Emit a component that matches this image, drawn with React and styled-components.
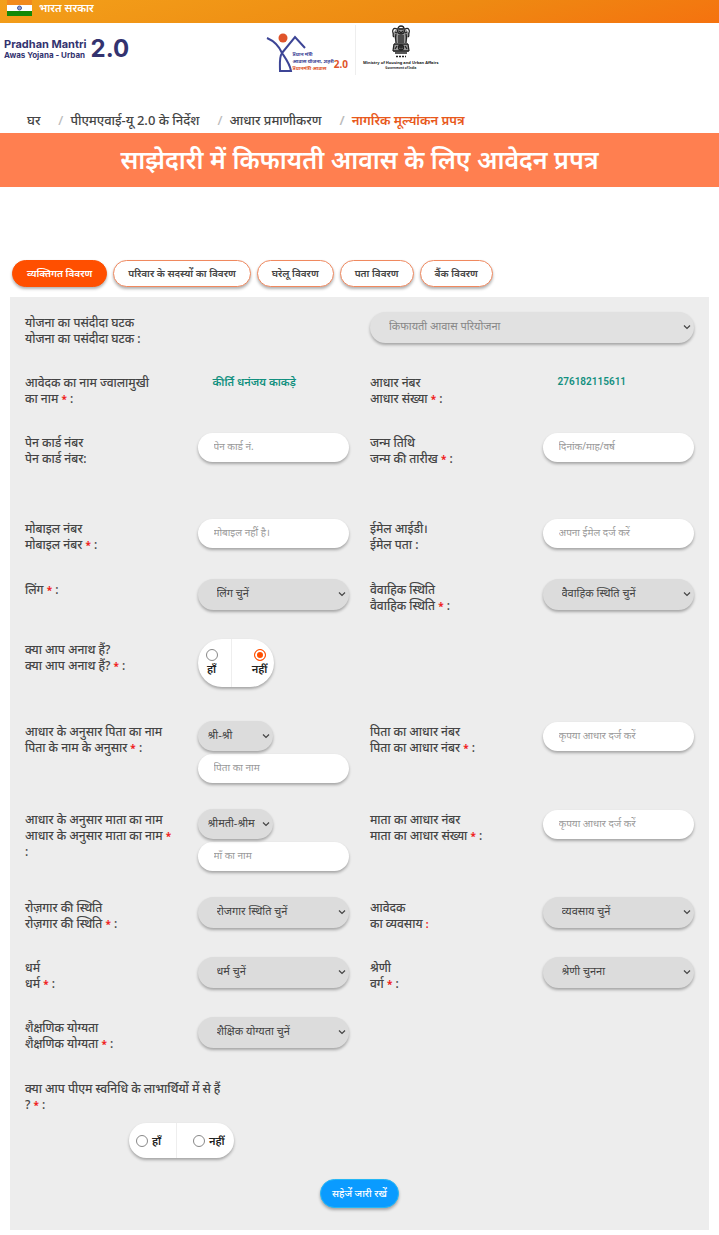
import React, { useState } from "react";
import styled, { createGlobalStyle } from "styled-components";

const GlobalStyle = createGlobalStyle`
	* {
		box-sizing: border-box;
	}
	body {
		margin: 0;
		background: #fff;
		color: #444;
		font-family: "Noto Sans", "Noto Sans Devanagari", sans-serif;
		font-size: 12px;
		line-height: 16px;
	}
	button, input, select {
		font-family: inherit;
	}
`;

const tabs = [
	"व्यक्तिगत विवरण",
	"परिवार के सदस्यों का विवरण",
	"घरेलू विवरण",
	"पता विवरण",
	"बैंक विवरण",
];

const Chevron = () => (
	<ChevronIcon viewBox="0 0 8 8" aria-hidden="true">
		<path d="M1 2.5 L4 5.5 L7 2.5" fill="none" stroke="currentColor" strokeWidth="1.2" />
	</ChevronIcon>
);

const Label = ({ id, first, second, mark = "both" }) => (
	<FieldLabel htmlFor={id}>
		{first && <>{first}<br /></>}
		{second}
		{mark === "both" && <> <Star>*</Star> :</>}
		{mark === "colon" && " :"}
		{mark === "tight" && ":"}
		{mark === "red" && <> <Star>:</Star></>}
	</FieldLabel>
);

const Select = ({ id, text, size, disabled, label }) => (
	<SelectWrap $size={size} $off={disabled}>
		<select id={id} disabled={disabled} aria-label={label}>
			<option>{text}</option>
		</select>
		<Chevron />
	</SelectWrap>
);

const HouseLogo = () => (
	<svg width="42" height="39" viewBox="0 0 42 39" aria-hidden="true">
		<circle cx="17" cy="5" r="4.5" fill="#e0542a" />
		<path d="M1 5 C8 8 13 13 16 20 L29 4 L39 15 M16 20 C13 24 14 31 14 38 H25 C24 31 20 26 16 20" fill="none" stroke="#3d4596" strokeWidth="2" />
	</svg>
);

const Emblem = () => (
	<svg width="20" height="33" viewBox="0 0 20 33" aria-hidden="true">
		<path d="M6 3 H14 L18 8 L15 18 H5 L2 8 Z M3 19 H17 V27 H3 Z" fill="#999" />
		<g fill="none" stroke="#222" strokeWidth="1.3">
			<path d="M7 4 C7 0 13 0 13 4 C14 7 13 9 10 9 C7 9 6 7 7 4 Z" />
			<path d="M6 4 C2 2 1 6 2 8 C3 10 1 10 3 12 M14 4 C18 2 19 6 18 8 C17 10 19 10 17 12" />
			<path d="M4 7 L6 8 M14 8 L16 7 M8 4 H12 M8 6 L10 8 L12 6" />
			<path d="M5 9 C4 13 5 15 5 18 M15 9 C16 13 15 15 15 18 M8 10 V18 M10 10 V18 M12 10 V18" />
			<path d="M3 19 H17 M2 26 H18 M3 19 L2 26 M17 19 L18 26 M4 28 H16" />
			<circle cx="10" cy="22.5" r="2.5" />
			<path d="M4 24 L6 21 M14 21 L16 24 M10 20 V25 M8 22 H12" />
		</g>
		<path d="M5 31.5 H15" stroke="#222" strokeWidth="1.5" strokeDasharray="2 1" />
	</svg>
);

const App = () => {
	const [orphan, setOrphan] = useState("no");
	const [svanidhi, setSvanidhi] = useState("");
	const [tab, setTab] = useState(0);

	return (
		<>
			<GlobalStyle />
			<TopBar>
				<svg width="25" height="16" viewBox="0 0 25 16" aria-hidden="true">
					<rect width="25" height="5" fill="#f28a1c" />
					<rect y="5" width="25" height="6" fill="#fff" />
					<rect y="11" width="25" height="5" fill="#128807" />
					<circle cx="12.5" cy="8" r="2" fill="#8f9bd0" stroke="#4457a0" />
				</svg>
				<span>भारत सरकार</span>
			</TopBar>
			<Header>
				<Brand>
					<div>
						<BrandTitle>Pradhan Mantri</BrandTitle>
						<BrandSub>Awas Yojana - Urban</BrandSub>
					</div>
					<BrandVersion>2.0</BrandVersion>
				</Brand>
				<Logos>
					<House>
						<HouseLogo />
						<HouseText>
							<span>प्रधान मंत्री</span>
							<span>आवास योजना, शहरी</span>
							<em>प्रधानमंत्री आवास</em>
						</HouseText>
						<HouseVersion>2.0</HouseVersion>
					</House>
					<Ministry>
						<Emblem />
						<b>Ministry of Housing and Urban Affairs</b>
						<small>Government of India</small>
					</Ministry>
				</Logos>
			</Header>
			<Crumbs>
				<a href="#home">घर</a>
				<a href="#guide">पीएमएवाई-यू 2.0 के निर्देश</a>
				<a href="#aadhaar">आधार प्रमाणीकरण</a>
				<a href="#form" aria-current="page">नागरिक मूल्यांकन प्रपत्र</a>
			</Crumbs>
			<Title>साझेदारी में किफायती आवास के लिए आवेदन प्रपत्र</Title>
			<Tabs>
				{tabs.map((name, i) => (
					<Tab key={name} type="button" $active={tab === i} onClick={() => setTab(i)}>
						{name}
					</Tab>
				))}
			</Tabs>
			<Panel onSubmit={(e) => e.preventDefault()}>
				<Row>
					<Wide><Label id="scheme" first="योजना का पसंदीदा घटक" second="योजना का पसंदीदा घटक" mark="colon" /></Wide>
					<Wide><Select id="scheme" text="किफायती आवास परियोजना" disabled /></Wide>
				</Row>
				<Row>
					<Label id="name" first="आवेदक का नाम ज्वालामुखी" second="का नाम" />
					<Value id="name">कीर्ति धनंजय काकड़े</Value>
					<Label id="aadhaar" first="आधार नंबर" second="आधार संख्या" />
					<Value id="aadhaar" $number>276182115611</Value>
				</Row>
				<Row $h={86}>
					<Label id="pan" first="पेन कार्ड नंबर" second="पेन कार्ड नंबर" mark="tight" />
					<Input id="pan" placeholder="पेन कार्ड नं." />
					<Label id="dob" first="जन्म तिथि" second="जन्म की तारीख" />
					<Input id="dob" placeholder="दिनांक/माह/वर्ष" />
				</Row>
				<Row $h={61}>
					<Label id="mobile" first="मोबाइल नंबर" second="मोबाइल नंबर" />
					<Input id="mobile" placeholder="मोबाइल नहीं है।" />
					<Label id="email" first="ईमेल आईडी।" second="ईमेल पता" mark="colon" />
					<Input id="email" placeholder="अपना ईमेल दर्ज करें" />
				</Row>
				<Row>
					<Label id="gender" second="लिंग" />
					<Select id="gender" text="लिंग चुनें" />
					<Label id="marital" first="वैवाहिक स्थिति" second="वैवाहिक स्थिति" />
					<Select id="marital" text="वैवाहिक स्थिति चुनें" />
				</Row>
				<Row $h={82}>
					<Label first="क्या आप अनाथ हैं?" second="क्या आप अनाथ हैं?" />
					<RadioPill role="radiogroup" aria-label="क्या आप अनाथ हैं?" $stacked>
						<label>
							<input type="radio" name="orphan" checked={orphan === "yes"} onChange={() => setOrphan("yes")} />
							हाँ
						</label>
						<label>
							<input type="radio" name="orphan" checked={orphan === "no"} onChange={() => setOrphan("no")} />
							नहीं
						</label>
					</RadioPill>
				</Row>
				<Row $h={88}>
					<Label id="father" first="आधार के अनुसार पिता का नाम" second="पिता के नाम के अनुसार" />
					<Stack>
						<Select text="श्री-श्री" size="s" label="पिता का नाम" />
						<Input id="father" placeholder="पिता का नाम" />
					</Stack>
					<Label id="fatherAadhaar" first="पिता का आधार नंबर" second="पिता का आधार नंबर" />
					<Input id="fatherAadhaar" placeholder="कृपया आधार दर्ज करें" />
				</Row>
				<Row $h={88}>
					<Label id="mother" first="आधार के अनुसार माता का नाम" second="आधार के अनुसार माता का नाम" />
					<Stack>
						<Select text="श्रीमती-श्रीमती" size="s" label="माता का नाम" />
						<Input id="mother" placeholder="माँ का नाम" />
					</Stack>
					<Label id="motherAadhaar" first="माता का आधार नंबर" second="माता का आधार संख्या" />
					<Input id="motherAadhaar" placeholder="कृपया आधार दर्ज करें" />
				</Row>
				<Row>
					<Label id="job" first="रोज़गार की स्थिति" second="रोज़गार की स्थिति" />
					<Select id="job" text="रोजगार स्थिति चुनें" />
					<Label id="work" first="आवेदक" second="का व्यवसाय" mark="red" />
					<Select id="work" text="व्यवसाय चुनें" />
				</Row>
				<Row>
					<Label id="religion" first="धर्म" second="धर्म" />
					<Select id="religion" text="धर्म चुनें" />
					<Label id="category" first="श्रेणी" second="वर्ग" />
					<Select id="category" text="श्रेणी चुनना" />
				</Row>
				<Row $h={61}>
					<Label id="education" first="शैक्षणिक योग्यता" second="शैक्षणिक योग्यता" />
					<Select id="education" text="शैक्षिक योग्यता चुनें" />
				</Row>
				<Row $h={45}>
					<Wide><Label first="क्या आप पीएम स्वनिधि के लाभार्थियों में से हैं" second="?" /></Wide>
				</Row>
				<Indent>
					<RadioPill role="radiogroup" aria-label="क्या आप पीएम स्वनिधि के लाभार्थियों में से हैं?">
						<label>
							<input type="radio" name="svanidhi" checked={svanidhi === "yes"} onChange={() => setSvanidhi("yes")} />
							हाँ
						</label>
						<label>
							<input type="radio" name="svanidhi" checked={svanidhi === "no"} onChange={() => setSvanidhi("no")} />
							नहीं
						</label>
					</RadioPill>
				</Indent>
				<Save type="submit">सहेजें जारी रखें</Save>
			</Panel>
		</>
	);
};

const TopBar = styled.div`
	display: flex;
	gap: 7px;
	height: 23px;
	padding-left: 7px;
	color: #fff;
	font-size: 11px;
	font-weight: 600;
	line-height: 15px;
	background: linear-gradient(165deg, #f3a01a, #ee8a12 60%, #f5720f);
`;
const Header = styled.header`
	display: grid;
	grid-template-columns: 1fr auto 1fr;
	height: 83px;
	padding: 2px 18px 2px 4px;
`;
const Brand = styled.div`
	display: flex;
	align-items: center;
	gap: 4px;
	height: 48px;
	color: #33336f;
	white-space: nowrap;
`;
const BrandTitle = styled.div`
	font-family: Inter, sans-serif;
	font-size: 11px;
	font-weight: 700;
	line-height: 12px;
`;
const BrandSub = styled.div`
	font-family: Inter, sans-serif;
	font-size: 8px;
	font-weight: 700;
	line-height: 10px;
`;
const BrandVersion = styled.div`
	font-family: Inter, sans-serif;
	font-size: 24px;
	font-weight: 700;
	line-height: 28px;
`;
const Logos = styled.div`
	display: flex;
	height: 50px;
`;
const House = styled.div`
	display: flex;
	align-items: flex-end;
	padding: 0 7px 3px 0;
	border-right: 1px solid #eee;
	white-space: nowrap;
`;
const HouseText = styled.div`
	display: flex;
	flex-direction: column;
	margin-left: -16px;
	color: #3d4596;
	font-size: 5px;
	font-weight: 700;
	line-height: 7px;
	em {
		color: #e0542a;
		font-style: normal;
	}
`;
const HouseVersion = styled.b`
	padding-bottom: 2px;
	color: #e0542a;
	font-size: 10px;
	line-height: 12px;
`;
const Ministry = styled.div`
	display: flex;
	flex-direction: column;
	align-items: center;
	padding-left: 7px;
	color: #222;
	white-space: nowrap;
	b {
		margin-top: 2px;
		font-size: 4px;
		line-height: 6px;
	}
	small {
		font-size: 3px;
		font-weight: 700;
		line-height: 5px;
	}
`;
const Crumbs = styled.nav`
	display: flex;
	align-items: center;
	height: 27px;
	padding-left: 27px;
	a {
		color: #444;
		font-size: 13px;
		font-weight: 500;
		text-decoration: none;
	}
	a + a::before {
		content: "/";
		margin: 0 7px 0 18px;
		color: #bbb;
	}
	a[aria-current] {
		color: #e8591c;
		font-weight: 600;
	}
`;
const Title = styled.h1`
	margin: 0 0 73px;
	padding: 10px 0 12px;
	background: #ff7f50;
	color: #fff;
	font-size: 25px;
	font-weight: 600;
	line-height: 32px;
	text-align: center;
`;
const Tabs = styled.div`
	display: flex;
	flex-wrap: wrap;
	gap: 6px;
	margin: 0 12px 10px;
`;
const Tab = styled.button`
	height: 27px;
	padding: 0 14px 2px;
	border: 1px solid ${({ $active }) => ($active ? "#ff4f00" : "#f0895f")};
	border-radius: 14px;
	background: ${({ $active }) => ($active ? "#ff4f00" : "#fff")};
	color: ${({ $active }) => ($active ? "#fff" : "#444")};
	font-size: 10px;
	font-weight: 600;
	box-shadow: 0 2px 3px rgba(0, 0, 0, 0.3);
`;
const Panel = styled.form`
	margin: 0 10px 5px;
	padding: 15px 15px 22px;
	background: #ededed;
`;
const Row = styled.div`
	display: grid;
	grid-template-columns: repeat(4, minmax(0, 1fr));
	align-items: start;
	column-gap: 21px;
	min-height: ${({ $h }) => $h || 60}px;
`;
const Wide = styled.div`
	grid-column: span 2;
`;
const FieldLabel = styled.label`
	display: block;
	padding-top: 3px;
	font-weight: 500;
`;
const Star = styled.span`
	color: #f02020;
	font-size: 10px;
	font-weight: 700;
`;
const Value = styled.output`
	padding: 2px 15px;
	color: #12907f;
	font-family: ${({ $number }) => ($number ? "Roboto, sans-serif" : "inherit")};
	font-size: ${({ $number }) => ($number ? "10px" : "11px")};
	font-weight: 600;
	white-space: nowrap;
`;
const Input = styled.input`
	width: 100%;
	height: 29px;
	margin-top: 1px;
	padding: 0 16px 4px;
	border: 0;
	border-radius: 15px;
	background: #fff;
	color: #444;
	font-size: 10px;
	box-shadow: 0 2px 3px rgba(0, 0, 0, 0.3);
	&::placeholder {
		color: #999;
	}
`;
const SelectWrap = styled.div`
	position: relative;
	width: ${({ $size }) => ($size === "s" ? "75px" : "100%")};
	color: ${({ $off }) => ($off ? "#888" : "#444")};
	select {
		display: block;
		width: 100%;
		height: ${({ $size }) => ($size === "s" ? "30px" : "31px")};
		padding: ${({ $size }) => ($size === "s" ? "0 18px 4px 10px" : "0 16px 4px 19px")};
		appearance: none;
		border: 0;
		border-radius: 16px;
		background: ${({ $off }) => ($off ? "#e1e1e1" : "#dcdcdc")};
		color: inherit;
		opacity: 1;
		font-size: 11px;
		box-shadow: 0 2px 3px rgba(0, 0, 0, 0.3);
	}
`;
const ChevronIcon = styled.svg`
	position: absolute;
	top: 11px;
	right: 3px;
	width: 8px;
	height: 8px;
	color: #444;
	pointer-events: none;
`;
const Stack = styled.div`
	display: flex;
	flex-direction: column;
	gap: 2px;
`;
const RadioPill = styled.div`
	display: inline-flex;
	width: ${({ $stacked }) => ($stacked ? "76px" : "105px")};
	height: ${({ $stacked }) => ($stacked ? "48px" : "35px")};
	border-radius: 24px;
	background: #fff;
	box-shadow: 0 2px 3px rgba(0, 0, 0, 0.3);
	label {
		display: flex;
		flex: 0 0 ${({ $stacked }) => ($stacked ? "33px" : "47px")};
		flex-direction: ${({ $stacked }) => ($stacked ? "column" : "row")};
		align-items: center;
		justify-content: ${({ $stacked }) => ($stacked ? "center" : "flex-start")};
		gap: ${({ $stacked }) => ($stacked ? "0" : "4px")};
		padding: ${({ $stacked }) => ($stacked ? "0 5px 0 0" : "0 0 0 7px")};
		color: #222;
		font-size: 11px;
		font-weight: 600;
	}
	label + label {
		flex: 1 0 0;
		border-left: 1px solid #eee;
		padding: ${({ $stacked }) => ($stacked ? "0 0 0 14px" : "0 0 0 16px")};
	}
	input {
		flex: none;
		appearance: none;
		width: 12px;
		height: 12px;
		margin: 0;
		border: 1px solid #888;
		border-radius: 50%;
		background: #fff;
	}
	input:checked {
		border-color: #ff4f00;
		background: #ff4f00;
		box-shadow: inset 0 0 0 2px #fff;
	}
`;
const Indent = styled.div`
	display: flex;
	padding-left: 104px;
`;
const Save = styled.button`
	display: block;
	height: 29px;
	margin: 21px auto 0;
	padding: 0 11px 2px;
	border: 1px solid #25b7f5;
	border-radius: 15px;
	background: #0a9bff;
	color: #fff;
	font-size: 10px;
	font-weight: 500;
	box-shadow: 0 2px 3px rgba(0, 0, 0, 0.3);
`;

export default App;
